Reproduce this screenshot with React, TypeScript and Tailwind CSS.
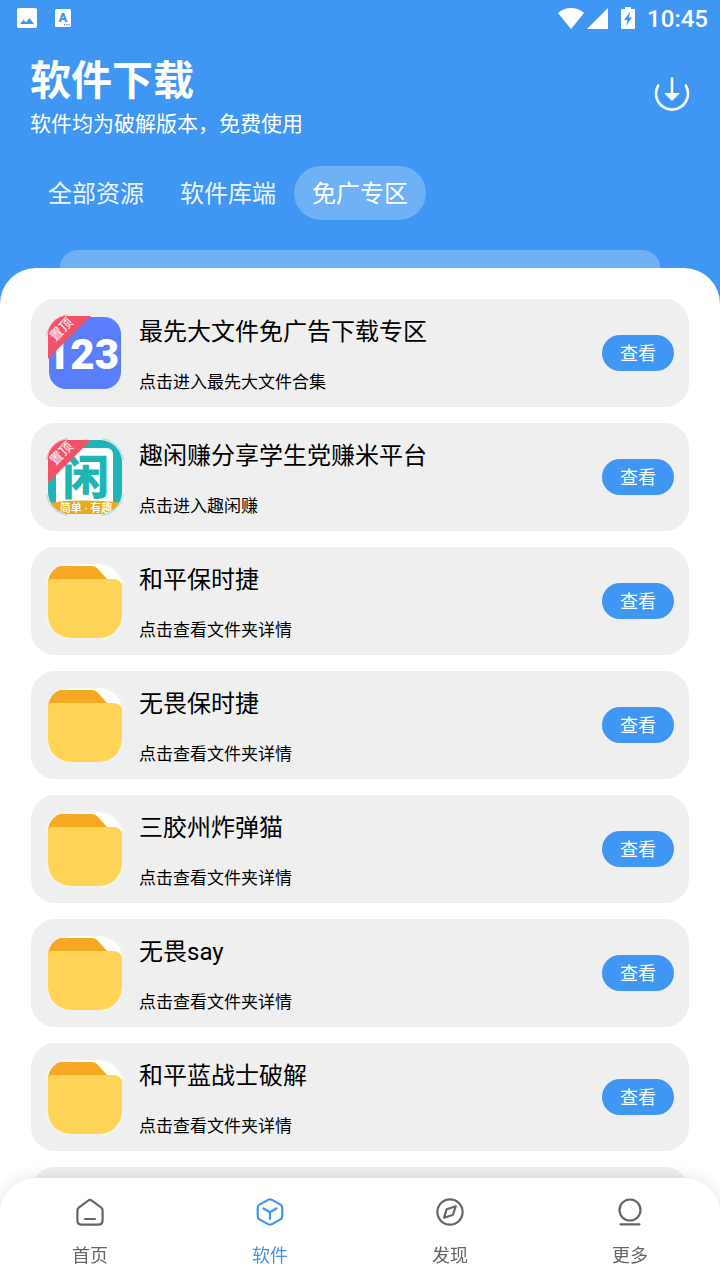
import React, { useState } from "react";

type IconKind = "pan123" | "quxian" | "folder";

interface Entry {
  title: string;
  desc: string;
  icon: IconKind;
}

const tabs = ["全部资源", "软件库端", "免广专区"];

const folderDesc = "点击查看文件夹详情";

const entries: Entry[] = [
  { title: "最先大文件免广告下载专区", desc: "点击进入最先大文件合集", icon: "pan123" },
  { title: "趣闲赚分享学生党赚米平台", desc: "点击进入趣闲赚", icon: "quxian" },
  { title: "和平保时捷", desc: folderDesc, icon: "folder" },
  { title: "无畏保时捷", desc: folderDesc, icon: "folder" },
  { title: "三胶州炸弹猫", desc: folderDesc, icon: "folder" },
  { title: "无畏say", desc: folderDesc, icon: "folder" },
  { title: "和平蓝战士破解", desc: folderDesc, icon: "folder" },
  { title: "", desc: "", icon: "folder" },
];

function CornerRing({ color }: { color: string }) {
  return (
    <path
      d="M.7 22A24 24 0 0 1 22 .7M56 .7A24 24 0 0 1 77.3 22M77.3 56A24 24 0 0 1 56 77.3M22 77.3A24 24 0 0 1 .7 56"
      fill="none"
      stroke={color}
      strokeWidth="1"
    />
  );
}

function PinnedRibbon() {
  return (
    <g>
      <path d="M2 45V18C4 9 10 3 18 2H45Z" fill="#f25268" />
      <path d="M.7 22A24 24 0 0 1 22 .7" fill="none" stroke="#f3a9b1" strokeWidth="1" />
      <text
        x="15"
        y="20"
        transform="rotate(-45 15 15)"
        textAnchor="middle"
        fontSize="13"
        fontWeight="500"
        fill="#fde3e6"
      >
        置顶
      </text>
    </g>
  );
}

function FolderIcon() {
  return (
    <svg viewBox="0 0 78 78" className="size-[78px] shrink-0" aria-hidden="true">
      <rect x="2" y="2" width="74" height="74" rx="23" fill="#fff" />
      <path d="M2 20C3 11 8 5 15 4H46Q49 4 51 6L62 18V24H2Z" fill="#f7a823" />
      <path
        d="M2 21Q2 17 6 17H66Q76 17 76 25V53A23 23 0 0 1 53 76H25A23 23 0 0 1 2 53Z"
        fill="#ffd456"
      />
      <CornerRing color="#fbf6ea" />
    </svg>
  );
}

function Pan123Icon() {
  return (
    <svg viewBox="0 0 78 78" className="size-[78px] shrink-0" aria-hidden="true">
      <rect x="3" y="3" width="72" height="72" rx="17" fill="#5b7ffc" />
      <text
        x="73"
        y="55"
        textAnchor="end"
        fontSize="42"
        fontWeight="900"
        fontFamily="Roboto, sans-serif"
        fill="#fff"
      >
        123
      </text>
      <PinnedRibbon />
    </svg>
  );
}

function QuxianIcon() {
  return (
    <svg viewBox="0 0 78 78" className="size-[78px] shrink-0" aria-hidden="true">
      <defs>
        <clipPath id="quxian-shape">
          <rect x="2" y="2" width="74" height="74" rx="22" />
        </clipPath>
      </defs>
      <g clipPath="url(#quxian-shape)">
        <rect width="78" height="78" fill="#1fb5b7" />
        <path d="M10 10H60Q67 10 67 17V66H10Z" fill="#fff" />
        <text
          x="40"
          y="56"
          textAnchor="middle"
          fontSize="47"
          fontWeight="900"
          fill="#1fb5b7"
        >
          闲
        </text>
        <path d="M0 65Q39 60 78 65V78H0Z" fill="#e8ab1e" />
        <text x="40" y="74" textAnchor="middle" fontSize="11" fontWeight="500" fill="#fff">
          {"简单\u00a0·\u00a0有趣"}
        </text>
      </g>
      <CornerRing color="#a5d9d8" />
      <PinnedRibbon />
    </svg>
  );
}

function EntryIcon({ kind }: { kind: IconKind }) {
  if (kind === "pan123") return <Pan123Icon />;
  if (kind === "quxian") return <QuxianIcon />;
  return <FolderIcon />;
}

function StatusBar() {
  return (
    <div className="flex h-9 items-center justify-between pl-[17px] pr-3 text-white">
      <div className="flex items-center gap-[18px]">
        <svg viewBox="0 0 20 20" className="size-5" aria-hidden="true">
          <path
            fill="currentColor"
            fillRule="evenodd"
            d="M2 0H18Q20 0 20 2V18Q20 20 18 20H2Q0 20 0 18V2Q0 0 2 0ZM3 16H17L12.5 10L9 14.5L6.5 11.8Z"
          />
        </svg>
        <svg viewBox="0 0 16 18" className="h-[18px] w-4" aria-hidden="true">
          <rect width="16" height="18" rx="1.5" fill="currentColor" />
          <text x="8" y="13" textAnchor="middle" fontSize="13" fontWeight="900" fill="#3f97f3">
            A
          </text>
          <path d="M9 15.7H15" stroke="#3f97f3" strokeWidth="1.3" strokeDasharray="1.3 1" />
        </svg>
      </div>
      <div className="flex items-center">
        <svg viewBox="0 0 26 21" className="h-[21px] w-[26px]" aria-hidden="true">
          <path fill="currentColor" d="M13 21L0 5Q5.5 0 13 0T26 5Z" />
        </svg>
        <svg viewBox="0 0 21 21" className="ml-[3px] h-[21px] w-[21px]" aria-hidden="true">
          <path fill="currentColor" d="M21 0V21H0Z" />
        </svg>
        <svg viewBox="0 0 14 22" className="ml-[13px] h-[22px] w-3.5" aria-hidden="true">
          <path
            fill="currentColor"
            fillRule="evenodd"
            d="M4 0H10V2H13Q14 2 14 3V21Q14 22 13 22H1Q0 22 0 21V3Q0 2 1 2H4ZM9 5L3 13H6.5L5 19L11 10.5H8Z"
          />
        </svg>
        <span className="ml-3 pt-0.5 text-2xl font-medium leading-9">10:45</span>
      </div>
    </div>
  );
}

function HomeIcon() {
  return (
    <>
      <path d="M12.2 2.6Q14 1.3 15.8 2.6L25 9.3Q26.6 10.5 26.6 12.5V22.2Q26.6 26.6 22.2 26.6H5.8Q1.4 26.6 1.4 22.2V12.5Q1.4 10.5 3 9.3Z" />
      <path d="M9 21H19" />
    </>
  );
}

function CubeIcon() {
  return (
    <>
      <path d="M12 1.9Q14 .8 16 1.9L24.5 6.6Q26.3 7.6 26.3 9.7V18.3Q26.3 20.4 24.5 21.4L16 26.1Q14 27.2 12 26.1L3.5 21.4Q1.7 20.4 1.7 18.3V9.7Q1.7 7.6 3.5 6.6Z" />
      <path d="M7.5 10.5L14 14.2L20.5 10.5M14 14.2V21" />
    </>
  );
}

function CompassIcon() {
  return (
    <>
      <circle cx="14" cy="14" r="12.6" />
      <path d="M19.8 8.2L10.7 11.2L8 19.8L16.8 17Z" />
    </>
  );
}

function MoreIcon() {
  return (
    <>
      <circle cx="14" cy="12" r="10.5" />
      <path d="M4.5 26.3H23.5" />
    </>
  );
}

const navItems = [
  { label: "首页", Icon: HomeIcon },
  { label: "软件", Icon: CubeIcon },
  { label: "发现", Icon: CompassIcon },
  { label: "更多", Icon: MoreIcon },
];

export default function App() {
  const [tab, setTab] = useState(2);
  const [page, setPage] = useState(1);

  return (
    <div className="flex h-screen flex-col overflow-hidden bg-[#3f97f3] font-[Roboto,'Noto_Sans_CJK_SC',sans-serif]">
      <StatusBar />

      <header className="flex items-start justify-between px-[30px] pt-5 text-white">
        <div>
          <h1 className="text-[41px] font-bold leading-[50px]">软件下载</h1>
          <p className="mt-1 text-[21px] leading-7">软件均为破解版本，免费使用</p>
        </div>
        <button type="button" aria-label="下载" className="mt-5">
          <svg viewBox="0 0 36 36" className="size-9" fill="none" aria-hidden="true">
            <path
              d="M4.2 9.5A16 16 0 1 0 31.8 9.5"
              stroke="currentColor"
              strokeWidth="2.6"
              strokeLinecap="round"
            />
            <path d="M18 2.5V19" stroke="currentColor" strokeWidth="2.6" strokeLinecap="round" />
            <path d="M11 17.5H25L18 24.5Z" fill="currentColor" stroke="currentColor" strokeLinejoin="round" />
          </svg>
        </button>
      </header>

      <nav className="mt-7 flex px-[30px]" aria-label="资源分类">
        {tabs.map((label, i) => (
          <button
            key={label}
            type="button"
            onClick={() => setTab(i)}
            className={
              i === tab
                ? "rounded-full bg-white/25 px-[18px] pt-0.5 text-2xl leading-[52px] text-white"
                : "rounded-full px-[18px] pt-0.5 text-2xl leading-[52px] text-white/90"
            }
          >
            {label}
          </button>
        ))}
      </nav>

      <div className="mx-[60px] mt-[30px] h-[18px] shrink-0 rounded-t-[18px] bg-white/25" />

      <main className="min-h-0 flex-1 overflow-hidden rounded-t-[36px] bg-white">
        <ul className="flex h-full flex-col gap-4 overflow-y-auto px-[31px] pt-[31px] [scrollbar-width:none]">
          {entries.map((entry, i) => (
            <li
              key={i}
              className="flex min-h-[108px] shrink-0 items-center gap-[15px] rounded-3xl bg-[#efefef] p-[15px]"
            >
              {entry.title && (
                <>
                  <EntryIcon kind={entry.icon} />
                  <div className="flex min-w-0 flex-1 flex-col justify-between self-stretch text-black">
                    <h2 className="truncate text-2xl leading-9">{entry.title}</h2>
                    <p className="truncate text-[17px] leading-5">{entry.desc}</p>
                  </div>
                  <button
                    type="button"
                    className="h-9 w-[72px] shrink-0 rounded-full bg-[#3f97f3] pt-0.5 text-lg leading-[34px] text-white"
                  >
                    查看
                  </button>
                </>
              )}
            </li>
          ))}
        </ul>
      </main>

      <nav
        className="fixed inset-x-0 bottom-0 grid h-[102px] grid-cols-4 rounded-t-[36px] bg-white shadow-[0_0_16px_rgba(0,0,0,0.12)]"
        aria-label="主导航"
      >
        {navItems.map(({ label, Icon }, i) => (
          <button
            key={label}
            type="button"
            onClick={() => setPage(i)}
            className={
              i === page
                ? "flex flex-col items-center pt-5 text-[#4293ea]"
                : "flex flex-col items-center pt-5 text-[#666666]"
            }
          >
            <svg
              viewBox="0 0 28 28"
              className="size-7"
              fill="none"
              stroke="currentColor"
              strokeWidth="2.2"
              strokeLinecap="round"
              strokeLinejoin="round"
              aria-hidden="true"
            >
              <Icon />
            </svg>
            <span className="mt-[18px] text-lg leading-6">{label}</span>
          </button>
        ))}
      </nav>
    </div>
  );
}
